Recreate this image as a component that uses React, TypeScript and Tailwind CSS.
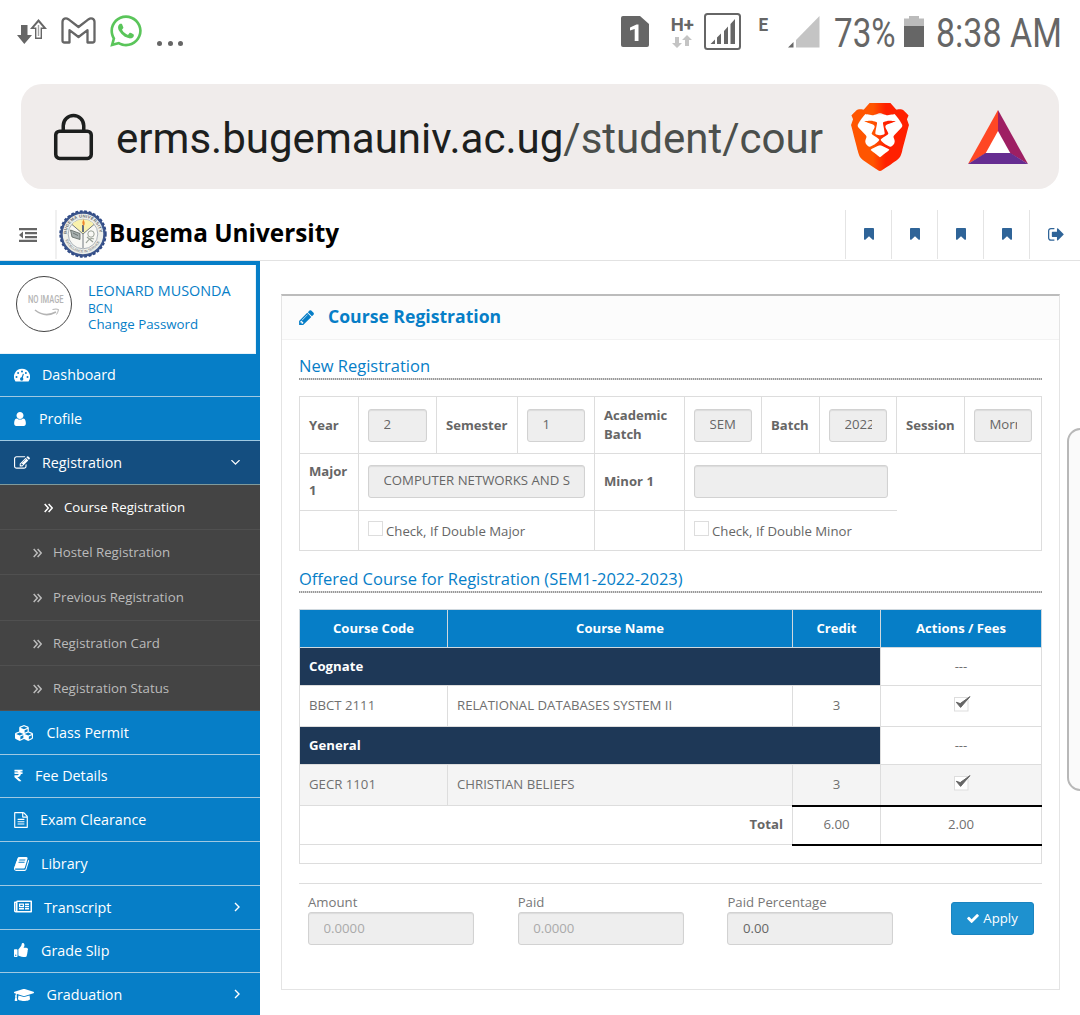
import React from "react";
import { FaCubes, FaRupeeSign, FaRegNewspaper, FaThumbsUp, FaWhatsapp, FaGraduationCap } from "react-icons/fa";
import { SiBrave } from "react-icons/si";

const P = {
  bookmark:
    "M1420 128q23 0 44 9 33 13 52.5 41t19.5 62v1289q0 34-19.5 62t-52.5 41q-19 8-44 8-48 0-83-32l-441-424-441 424q-36 33-83 33-23 0-44-9-33-13-52.5-41t-19.5-62v-1289q0-34 19.5-62t52.5-41q21-9 44-9h1048z",
  pencil:
    "M491 1536l91-91-235-235-91 91v107h128v128h107zm523-928q0-22-22-22-10 0-17 7l-542 542q-7 7-7 17 0 22 22 22 10 0 17-7l542-542q7-7 7-17zm-54-192l416 416-832 832h-416v-416zm683 96q0 53-37 90l-166 166-416-416 166-165q36-38 90-38 53 0 91 38l235 234q37 39 37 91z",
  check:
    "M1671 566q0 40-28 68l-724 724-136 136q-28 28-68 28t-68-28l-136-136-362-362q-28-28-28-68t28-68l136-136q28-28 68-28t68 28l294 295 656-657q28-28 68-28t68 28l136 136q28 28 28 68z",
  user: "M1536 1399q0 109-62.5 187t-150.5 78h-854q-88 0-150.5-78t-62.5-187q0-85 8.5-160.5t31.5-152 58.5-131 94-89 134.5-34.5q131 128 313 128t313-128q76 0 134.5 34.5t94 89 58.5 131 31.5 152 8.5 160.5zm-256-887q0 159-112.5 271.5t-271.5 112.5-271.5-112.5-112.5-271.5 112.5-271.5 271.5-112.5 271.5 112.5 112.5 271.5z",
  edit: "M888 1184l116-116-152-152-116 116v56h96v96h56zm440-720q-16-16-33 1l-350 350q-17 17-1 33t33-1l350-350q17-17 1-33zm80 594v190q0 119-84.5 203.5t-203.5 84.5h-832q-119 0-203.5-84.5t-84.5-203.5v-832q0-119 84.5-203.5t203.5-84.5h832q63 0 117 25 15 7 18 23 3 17-9 29l-49 49q-14 14-32 8-23-6-45-6h-832q-66 0-113 47t-47 113v832q0 66 47 113t113 47h832q66 0 113-47t47-113v-126q0-13 9-22l64-64q15-15 35-7t20 29zm-96-738l288 288-672 672h-288v-288zm444 132l-92 92-288-288 92-92q28-28 68-28t68 28l152 152q28 28 28 68t-28 68z",
  signout:
    "M704 1440q0 4 1 20t.5 26.5-3 23.5-10 19.5-20.5 6.5h-320q-119 0-203.5-84.5t-84.5-203.5v-704q0-119 84.5-203.5t203.5-84.5h320q13 0 22.5 9.5t9.5 22.5q0 4 1 20t.5 26.5-3 23.5-10 19.5-20.5 6.5h-320q-66 0-113 47t-47 113v704q0 66 47 113t113 47h312l11.5 1 11.5 3 8 5.5 7 9 2 13.5zm928-544q0 26-19 45l-544 544q-19 19-45 19t-45-19-19-45v-288h-448q-26 0-45-19t-19-45v-384q0-26 19-45t45-19h448v-288q0-26 19-45t45-19 45 19l544 544q19 19 19 45z",
  book: "M1703 478q40 57 18 129l-275 906q-19 64-76.5 107.5t-122.5 43.5h-923q-77 0-148.5-53.5t-99.5-131.5q-24-67-2-127 0-4 3-27t4-37q1-8-3-21.5t-3-19.5q2-11 8-21t16.5-23.5 16.5-23.5q23-38 45-91.5t30-91.5q3-10 .5-30t-.5-28q3-11 17-28t17-23q21-36 42-92t25-90q1-9-2.5-32t.5-28q4-13 22-30.5t22-22.5q19-26 42.5-84.5t27.5-96.5q1-8-3-25.5t-2-26.5q2-8 9-18t18-23 17-21q8-12 16.5-30.5t15-35 16-36 19.5-32 26.5-23.5 36-11.5 47.5 5.5l-1 3q38-9 51-9h761q74 0 114 56t18 130l-274 906q-36 119-71.5 153.5t-128.5 34.5h-869q-27 0-38 15-11 16-1 43 24 70 144 70h923q29 0 56-15.5t35-41.5l300-987q7-22 5-57 38 15 59 43zm-1064 2q-4 13 2 22.5t20 9.5h608q13 0 25.5-9.5t16.5-22.5l21-64q4-13-2-22.5t-20-9.5h-608q-13 0-25.5 9.5t-16.5 22.5zm-83 256q-4 13 2 22.5t20 9.5h608q13 0 25.5-9.5t16.5-22.5l21-64q4-13-2-22.5t-20-9.5h-608q-13 0-25.5 9.5t-16.5 22.5z",
  file: "M1596 380q28 28 48 76t20 88v1152q0 40-28 68t-68 28h-1344q-40 0-68-28t-28-68v-1600q0-40 28-68t68-28h896q40 0 88 20t76 48zm-444-244v376h376q-10-29-22-41l-313-313q-12-12-41-22zm384 1528v-1024h-416q-40 0-68-28t-28-68v-416h-768v1536h1280zM512 800q0-14 9-23t23-9h704q14 0 23 9t9 23v64q0 14-9 23t-23 9h-704q-14 0-23-9t-9-23zM512 1056q0-14 9-23t23-9h704q14 0 23 9t9 23v64q0 14-9 23t-23 9h-704q-14 0-23-9t-9-23zM512 1312q0-14 9-23t23-9h704q14 0 23 9t9 23v64q0 14-9 23t-23 9h-704q-14 0-23-9t-9-23z",
  down: "M1395 736q0 13-10 23l-466 466q-10 10-23 10t-23-10l-466-466q-10-10-10-23t10-23l50-50q10-10 23-10t23 10l393 393 393-393q10-10 23-10t23 10l50 50q10 10 10 23z",
};

function Glyph({ d, className, box = "0 0 1792 1792" }: { d: string; className: string; box?: string }) {
  return (
    <svg viewBox={box} className={className} fill="currentColor">
      <path d={d} />
    </svg>
  );
}

function Dash() {
  return (
    <svg viewBox="0 0 16 16" className="h-4 w-4">
      <path d="M8 1.8a8 8 0 0 0-6.7 12.4c.2.3.4.4.7.4h12c.3 0 .5-.1.7-.4A8 8 0 0 0 8 1.8Z" fill="#fff" />
      <g fill="#067ec7">
        <circle cx="2.5" cy="10" r="1" />
        <circle cx="4.1" cy="6.1" r="1" />
        <circle cx="8" cy="4.4" r="1" />
        <circle cx="11.9" cy="6.1" r="1" />
        <circle cx="13.5" cy="10" r="1" />
        <circle cx="7.7" cy="12" r="1.7" />
        <path d="M7.3 11 8.9 6.7l1 .3-1.3 4.4Z" />
      </g>
    </svg>
  );
}

function DoubleAngle() {
  return (
    <svg viewBox="0 0 9 10" className="h-[10px] w-[9px]" fill="none" stroke="currentColor" strokeWidth="1.5">
      <path d="m.7 1 3.6 4L.7 9M4.6 1l3.6 4-3.6 4" />
    </svg>
  );
}

function StatusBar() {
  return (
    <div className="flex h-[64px] items-start pt-[14px] pl-[17px] text-[#666]">
      <svg viewBox="0 0 30 26" className="mt-[4px] h-[26px] w-[30px] shrink-0" fill="#666">
        <path d="M4 7h6.5v10H15l-7.700 9L0 17h4z" />
        <path fillRule="evenodd" d="M21.500 1 30 11h-5v10h-7V11h-5zM21.500 4.200 16.800 9.600h2.600v9.800h4.200V9.600h2.600z" />
        <path d="M20.800 7h1.400v11h-1.400z" opacity=".6" />
      </svg>
      <svg viewBox="0 0 35 27" className="mt-[3px] ml-[14px] h-[27px] w-[35px] shrink-0" fill="none" stroke="#666" strokeWidth="2.3" strokeLinejoin="round">
        <path d="M1.500 5v18.500q0 2 2 2h5V13.200l9 6.800 9-6.800v12.300h5q2 0 2-2V5c0-3.500-3.600-4.400-5.800-2.800L17.500 10 7.300 2.200C5 .6 1.500 1.500 1.500 5Z" />
      </svg>
      <FaWhatsapp className="mt-[-1px] ml-[12px] h-[36px] w-[36px] shrink-0 text-[#5ac55a]" />
      <div className="mt-[27px] ml-[13px] flex gap-[5.500px]">
        <i className="h-[5px] w-[5px] rounded-full bg-[#666]" />
        <i className="h-[5px] w-[5px] rounded-full bg-[#666]" />
        <i className="h-[5px] w-[5px] rounded-full bg-[#666]" />
      </div>
      <svg viewBox="0 0 28 31" className="mt-[2px] ml-auto h-[31px] w-[28px] shrink-0">
        <path d="M2 0h17l9 8v21q0 2-2 2H2q-2 0-2-2V2q0-2 2-2Z" fill="#666" />
        <path d="M9 11.500 15.500 8.500h2V25h-3.800V13L9 14.500Z" fill="#fff" />
      </svg>
      <div className="mt-[1px] ml-[21px] flex w-[24px] flex-col items-center">
        <span className="font-['Roboto'] text-[18.500px] leading-[20px] font-bold">H+</span>
        <svg viewBox="0 0 20 13" className="h-[13px] w-[20px]" fill="#c4c4c4">
          <path d="M3 2h4v6h3l-5 5-5-5h3zM13 11h4V5h3l-5-5-5 5h3z" />
        </svg>
      </div>
      <svg viewBox="0 0 37 37" className="mt-[-1px] ml-[10px] h-[37px] w-[37px] shrink-0" fill="#666">
        <rect x="1" y="1" width="35" height="35" rx="2.500" fill="none" stroke="#666" strokeWidth="2" />
        <path d="M6.500 31 11 26.500V31zM13 31v-6.500l4-4V31zM20 31V18l4-4.500V31zM26.500 31V11l4.500-5v25z" />
      </svg>
      <span className="mt-[1px] ml-[17px] font-['Roboto'] text-[19px] leading-[20px] font-bold">
        <span className="inline-block scale-x-[0.9]">E</span>
      </span>
      <svg viewBox="0 0 32 32" className="mt-[2px] ml-[19px] h-[32px] w-[32px] shrink-0">
        <path d="M0 31.500 5.500 26v5.500z" fill="#666" />
        <path d="M8 31.500V24L31.500 0v31.500z" fill="#c4c4c4" />
      </svg>
      <span className="mt-[-4px] ml-[14px] w-[62px] font-['Roboto'] text-[40px] leading-[48px] whitespace-nowrap">
        <span className="inline-block origin-left scale-x-[0.83]">73%</span>
      </span>
      <svg viewBox="0 0 20 31" className="mt-[2px] ml-[8px] h-[31px] w-[20px] shrink-0">
        <path d="M5 0h10v2.500h5V11H0V2.500h5z" fill="#bbb" />
        <path d="M0 10h20v21H0z" fill="#666" />
      </svg>
      <span className="mt-[-4px] ml-[12px] w-[144px] font-['Roboto'] text-[40px] leading-[48px] whitespace-nowrap">
        <span className="inline-block origin-left scale-x-[0.85]">8:38 AM</span>
      </span>
    </div>
  );
}

function UrlBar() {
  return (
    <div className="mt-[20px] mr-[21px] ml-[21px] flex h-[105px] items-center rounded-[21px] bg-[#f0eceb] pl-[32px]">
      <svg viewBox="0 0 42 48" className="h-[48px] w-[41px] shrink-0" fill="none" stroke="#1d1f1e" strokeWidth="3.600">
        <rect x="2.800" y="18" width="36.400" height="28" rx="4" />
        <path d="M10.500 18v-5.500a10 10 0 0 1 21 0V18" />
      </svg>
      <div className="mt-[4px] ml-[22px] w-[714px] font-['Roboto'] text-[42.050px] leading-[60px] whitespace-nowrap text-[#1d1f1e]">
        erms.bugemauniv.ac.ug<span className="text-[#4b4f4c]">/student/cour</span>
      </div>
      <div className="relative ml-[16px] h-[68px] w-[68px] shrink-0">
        <svg viewBox="0 0 69 69" className="absolute inset-0 h-full w-full">
          <defs>
            <linearGradient id="mane">
              <stop offset=".38" stopColor="#ff5500" />
              <stop offset=".6" stopColor="#ff2000" />
            </linearGradient>
          </defs>
          <path d="M18 12h33l7 13-8 30-15 7-15-7-9-30z" fill="#fff" />
        </svg>
        <SiBrave className="absolute inset-0 h-full w-full fill-[url(#mane)]" />
      </div>
      <svg viewBox="0 0 60 54" className="ml-[54px] h-[54px] w-[60px] shrink-0">
        <path d="M30 20 43 43H17z" fill="#fff" />
        <path d="M30 0v21L17.500 43.500 0 54z" fill="#ff4724" />
        <path d="M30 0v21l12.500 22.500L60 54z" fill="#9e1f63" />
        <path d="M0 54 17.500 43h25L60 54z" fill="#662d91" />
      </svg>
    </div>
  );
}

function Seal() {
  return (
    <svg viewBox="0 0 48 48" className="ml-[2px] h-[48px] w-[48px]">
      <defs>
        <path id="arcTop" d="M7.500 24a16.500 16.500 0 0 1 33 0" />
        <path id="arcBottom" d="M5.500 24a18.500 18.500 0 0 0 37 0" />
      </defs>
      <circle cx="24" cy="24" r="21.500" fill="#eef0ea" stroke="#3d568c" strokeWidth="2.400" />
      <circle cx="24" cy="24" r="22.800" fill="none" stroke="#2f4a86" strokeWidth="1.800" strokeDasharray="2.800 1.700" />
      <circle cx="24" cy="24" r="14.800" fill="#f8f8f4" stroke="#8d95a0" strokeWidth=".7" />
      <path d="M24 24 13 14.500a14.500 14.500 0 0 1 22 0z" fill="#f9f1ac" />
      <path d="M24 24V38M24 24l-11-9.500M24 24l11-9.500" stroke="#747b80" strokeWidth="1" fill="none" />
      <path d="M24 22v-7" stroke="#3b4d78" strokeWidth="1.600" />
      <path d="M24 9q3 4 .8 7-3-3 0-7" fill="#f0862c" />
      <path d="m11.500 20 9.500 3.500v6L13 27zM14 23l5 2.500" fill="#a8b0b0" stroke="#5c655f" strokeWidth=".8" />
      <path d="M27 33q4-6 8-4M28 27l6 5" stroke="#98a096" strokeWidth="1.200" fill="none" />
      <circle cx="32" cy="24" r="3.200" fill="none" stroke="#98a096" />
      <text className="fill-[#666a70] font-['Liberation_Sans'] text-[4.200px] font-bold">
        <textPath href="#arcTop" textLength="50">BUGEMA UNIVERSITY</textPath>
      </text>
      <text className="fill-[#6a6e74] font-['Liberation_Sans'] text-[3.500px]">
        <textPath href="#arcBottom" startOffset="6" textLength="44">EXCELLENCE IN SERVICE</textPath>
      </text>
    </svg>
  );
}

function Header() {
  return (
    <header className="flex h-[53px] border-b border-[#e2e2e2] pt-[2px]">
      <div className="flex h-[49px] w-[57px] items-center border-r-2 border-[#f0f0f0] pl-[18.500px]">
        <svg viewBox="0 0 18 14" className="h-[14px] w-[18px]" fill="#666">
          <path d="M0 0h18v2.200H0zM6 4h12v2.200H6zM6 8h12v2.200H6zM0 11.800h18V14H0zM0 7l4-3.500v7z" />
        </svg>
      </div>
      <Seal />
      <h1 className="ml-[2px] font-['Open_Sans'] text-[24.300px] leading-[46px] font-bold text-black">Bugema University</h1>
      <div className="ml-auto flex h-[49px]">
        {[0, 1, 2, 3].map((i) => (
          <div key={i} className="flex w-[46px] items-center justify-center border-l border-[#e4e4e4]">
            <Glyph d={P.bookmark} box="256 128 1280 1536" className="mt-[-1px] h-[12px] w-[10px] text-[#2f6498]" />
          </div>
        ))}
        <div className="flex w-[51px] items-center justify-center border-l border-[#e4e4e4] pl-px">
          <Glyph d={P.signout} box="64 256 1600 1300" className="h-[13px] w-[16px] text-[#2f6498]" />
        </div>
      </div>
    </header>
  );
}

type Item = { icon: React.ReactNode; label: string; pl: string; h: string; nudge?: string; arrow?: boolean };

function MenuRow({ item }: { item: Item }) {
  return (
    <div className={`flex ${item.h} items-center border-b border-[#9fc9e2] bg-[#067ec7] pr-[20px] text-[14.300px] text-white`}>
      <span className={`flex ${item.pl} shrink-0 items-center pl-[14px]`}>{item.icon}</span>
      <span className={item.nudge}>{item.label}</span>
      {item.arrow && (
        <svg viewBox="0 0 6 10" className="mt-[-1px] ml-auto h-[10px] w-[6px]" fill="none" stroke="#fff" strokeWidth="1.400">
          <path d="m1 1 4 4-4 4" />
        </svg>
      )}
    </div>
  );
}

const top: Item[] = [
  { icon: <Dash />, label: "Dashboard", pl: "w-[42px]", h: "h-[43px]", nudge: "mt-[-1px]" },
  { icon: <Glyph d={P.user} box="256 128 1280 1536" className="h-[14px] w-[12px]" />, label: "Profile", pl: "w-[39px]", h: "h-[44px]" },
];

const bottom: Item[] = [
  { icon: <FaCubes className="h-[18px] w-[20px]" />, label: "Class Permit", pl: "w-[46.500px]", h: "h-[44px]" },
  { icon: <FaRupeeSign className="mt-[-2px] h-[13px] w-[9px]" />, label: "Fee Details", pl: "w-[35px]", h: "h-[43px]", nudge: "mt-[-1px]" },
  { icon: <Glyph d={P.file} box="128 0 1536 1792" className="h-[16px] w-[14px]" />, label: "Exam Clearance", pl: "w-[40px]", h: "h-[44px]" },
  { icon: <Glyph d={P.book} box="64 128 1664 1536" className="h-[14px] w-[15px]" />, label: "Library", pl: "w-[41px]", h: "h-[44px]" },
  { icon: <FaRegNewspaper className="mt-[-2px] h-[17px] w-[18px]" />, label: "Transcript", pl: "w-[44px]", h: "h-[44px]", arrow: true },
  { icon: <FaThumbsUp className="mt-[-2px] h-[14px] w-[14px]" />, label: "Grade Slip", pl: "w-[41px]", h: "h-[43px]", nudge: "mt-[-1px]" },
  { icon: <FaGraduationCap className="h-[16px] w-[20px]" />, label: "Graduation", pl: "w-[46.500px]", h: "h-[44px]", arrow: true },
];

const subs = [
  { label: "Hostel Registration", h: "h-[45px]" },
  { label: "Previous Registration", h: "h-[46px]" },
  { label: "Registration Card", h: "h-[45px]" },
  { label: "Registration Status", h: "h-[45px]" },
];

function Sidebar() {
  return (
    <aside className="h-[754px] w-[260px] shrink-0 overflow-hidden bg-[#067ec7] pt-[4px]">
      <div className="mr-[4px] flex h-[89px] border-r border-b border-[#e8f3fa] bg-white pt-[11px] pl-[16px]">
        <div className="flex h-[56px] w-[56px] shrink-0 flex-col items-center justify-center rounded-full border border-[#444] pt-[3px] text-[#b4b4b4]">
          <span className="ml-[4px] inline-block scale-x-[0.72] font-['Roboto'] text-[10.500px] leading-[10px] font-medium whitespace-nowrap">NO IMAGE</span>
          <svg viewBox="0 0 26 9" className="mt-[3px] ml-[6px] h-[9px] w-[26px]" fill="none" stroke="#b4b4b4">
            <path d="M1 2q10 8 21 2" strokeWidth="1.600" />
            <path d="M18.500 1.500q4-1 6 0-.5 3-2 5" />
          </svg>
        </div>
        <div className="ml-[16px] pt-[6px] leading-[16px] text-[#067ec7]">
          <div className="text-[14.400px] leading-[17px]">LEONARD MUSONDA</div>
          <div className="pt-px text-[12.200px] leading-[17px]">BCN</div>
          <div className="mt-[-1px] text-[13.300px]">Change Password</div>
        </div>
      </div>
      {top.map((i) => (
        <MenuRow key={i.label} item={i} />
      ))}
      <div className="flex h-[44px] items-center border-b border-[#7f9a9c] bg-[#144e80] pl-[14px] text-[14.300px] text-white">
        <Glyph d={P.edit} box="0 128 1792 1536" className="h-[14px] w-[16px]" />
        <span className="ml-[12px]">Registration</span>
        <Glyph d={P.down} box="397 676 998 569" className="mt-[-1px] mr-[20px] ml-auto h-[5px] w-[9px]" />
      </div>
      <div className="bg-[#444] text-[13.250px] text-[#bbb]">
        <div className="flex h-[45px] items-center border-b border-[#505050] pt-px pl-[44px] text-white">
          <DoubleAngle />
          <span className="ml-[11px]">Course Registration</span>
        </div>
        {subs.map((s) => (
          <div key={s.label} className={`flex ${s.h} items-center border-b border-[#505050] pt-px pl-[33px]`}>
            <DoubleAngle />
            <span className="ml-[11px]">{s.label}</span>
          </div>
        ))}
      </div>
      {bottom.map((i) => (
        <MenuRow key={i.label} item={i} />
      ))}
    </aside>
  );
}

function Field({ value = "", className = "", color = "text-[#666]" }: { value?: string; className?: string; color?: string }) {
  return (
    <div
      className={`flex h-[33px] items-center rounded-[3px] border border-[#d2d2d2] bg-[#eee] px-[14.500px] text-[13.200px] shadow-[inset_0_1px_1px_rgba(0,0,0,0.08)] ${color} ${className}`}
    >
      <span className="w-full overflow-hidden whitespace-nowrap">{value}</span>
    </div>
  );
}

function CheckLabel({ text }: { text: string }) {
  return (
    <div className="flex items-start">
      <i className="mt-[1px] h-[15px] w-[15px] border border-[#ddd] bg-white" />
      <span className="ml-[3px] pt-[2px] leading-[19px]">{text}</span>
    </div>
  );
}

function Heading({ children, className }: { children: React.ReactNode; className: string }) {
  return (
    <div className={`flex w-[743px] flex-col justify-between ${className}`}>
      <h3 className="text-[16.500px] leading-[24px] text-[#067ec7]">{children}</h3>
      <div className="h-[2px] bg-[repeating-linear-gradient(90deg,#999_0_1px,#d6d6d6_1px_2px)]" />
    </div>
  );
}

function FormTable() {
  const b = "border border-[#ddd] p-0 px-[9px]";
  const low = "border border-[#ddd] px-[9px] pt-0 pb-[2px]";
  const th = "text-left text-[13.100px] font-bold leading-[19px]";
  return (
    <table className="mt-[16px] w-[743px] table-fixed border-collapse text-[13.200px] text-[#666]">
      <colgroup>
        <col className="w-[59px]" /><col className="w-[78px]" /><col className="w-[81px]" /><col className="w-[77px]" /><col className="w-[90px]" />
        <col className="w-[77px]" /><col className="w-[58px]" /><col className="w-[77px]" /><col className="w-[68px]" /><col className="w-[77px]" />
      </colgroup>
      <tbody>
        <tr className="h-[57px]">
          <th className={`${b} ${th}`}>Year</th>
          <td className={b}><Field value="2" /></td>
          <th className={`${b} ${th}`}>Semester</th>
          <td className={b}><Field value="1" /></td>
          <th className={`${b} ${th}`}>Academic Batch</th>
          <td className={b}><Field value="SEM" /></td>
          <th className={`${b} ${th}`}>Batch</th>
          <td className={b}><Field value="2022" /></td>
          <th className={`${b} ${th}`}>Session</th>
          <td className={b}><Field value="Morn" /></td>
        </tr>
        <tr className="h-[57px]">
          <th className={`${low} ${th}`}>Major 1</th>
          <td colSpan={3} className={low}><Field value="COMPUTER NETWORKS AND S" /></td>
          <th className={`${low} ${th}`}>Minor 1</th>
          <td colSpan={3} className="border border-r-0 border-[#ddd] px-[9px] pt-0 pb-[2px]"><Field /></td>
          <td colSpan={2} className="border-t border-r border-[#ddd]" />
        </tr>
        <tr className="h-[40px]">
          <td className={b} />
          <td colSpan={3} className={b}><CheckLabel text="Check, If Double Major" /></td>
          <td className={b} />
          <td colSpan={3} className="border-y border-l border-[#ddd] px-[9px]"><CheckLabel text="Check, If Double Minor" /></td>
          <td colSpan={2} className="border-r border-b border-[#ddd]" />
        </tr>
      </tbody>
    </table>
  );
}

function Checked() {
  return (
    <svg viewBox="0 0 17 16" className="mx-auto mb-[4px] block h-[16px] w-[17px] translate-x-px">
      <rect x=".5" y="1.500" width="13.500" height="13.500" fill="#fff" stroke="#ddd" />
      <path d="M2.300 6.300 6.200 7.600 16 .6 6.600 11.400z" fill="#666" stroke="#666" strokeWidth="1" />
    </svg>
  );
}

function CourseTable() {
  const h = "border border-[#cfd8de] bg-[#067ec7] font-bold text-white text-[13.100px] p-0";
  const c = "border border-[#ddd] p-0";
  const rows = [
    { group: "Cognate", code: "BBCT 2111", name: "RELATIONAL DATABASES SYSTEM II", bg: "bg-white" },
    { group: "General", code: "GECR 1101", name: "CHRISTIAN BELIEFS", bg: "bg-[#f4f4f4]" },
  ];
  return (
    <table className="mt-[16px] w-[743px] table-fixed border-collapse text-[13.200px] text-[#707070]">
      <colgroup>
        <col className="w-[148px]" /><col className="w-[345px]" /><col className="w-[88px]" /><col className="w-[161px]" />
      </colgroup>
      <tbody>
        <tr className="h-[38px]">
          <th className={h}>Course Code</th>
          <th className={h}>Course Name</th>
          <th className={h}>Credit</th>
          <th className={h}>Actions / Fees</th>
        </tr>
        {rows.map((r) => (
          <React.Fragment key={r.group}>
            <tr className="h-[38px]">
              <td colSpan={3} className="border border-[#ddd] bg-[#1e3857] px-[9px] font-bold text-white">{r.group}</td>
              <td className={`${c} text-center`}>---</td>
            </tr>
            <tr className={`h-[41px] ${r.bg}`}>
              <td className={`${c} px-[9px]`}>{r.code}</td>
              <td className={`${c} px-[9px]`}>{r.name}</td>
              <td className={`${c} text-center`}>3</td>
              <td className={c}><Checked /></td>
            </tr>
          </React.Fragment>
        ))}
        <tr className="h-[39px]">
          <td colSpan={2} className={`${c} pr-[9px] text-right font-bold text-[#666]`}>Total</td>
          <td className="border-x border-y-2 border-x-[#ddd] border-y-black text-center">6.00</td>
          <td className="border-x border-y-2 border-x-[#ddd] border-y-black text-center">2.00</td>
        </tr>
        <tr className="h-[19px]">
          <td colSpan={4} className={c} />
        </tr>
      </tbody>
    </table>
  );
}

function Panel() {
  return (
    <main className="mt-[33px] ml-[21px] h-[696px] w-[779px] shrink-0 border border-t-2 border-[#e4e4e4] border-t-[#bcbcbc]">
      <div className="flex h-[44px] items-center border-b border-[#f2f2f2] bg-[#fcfcfc] pb-px pl-[17px] text-[#067ec7]">
        <Glyph d={P.pencil} box="128 128 1515 1536" className="h-[15px] w-[15px]" />
        <h2 className="mt-[-2px] ml-[14px] text-[17.600px] font-bold">Course Registration</h2>
      </div>
      <div className="pl-[17px]">
        <Heading className="h-[40px] pt-[14px]">New Registration</Heading>
        <FormTable />
        <Heading className="h-[42px] pt-[16px]">Offered Course for Registration (SEM1-2022-2023)</Heading>
        <CourseTable />
        <div className="mt-[19px] flex w-[743px] border-t border-[#ddd] pt-[9px] pl-[9px] text-[13.200px] text-[#777]">
          {[
            { l: "Amount", v: "0.0000", c: "text-[#aaa]" },
            { l: "Paid", v: "0.0000", c: "text-[#aaa]" },
            { l: "Paid Percentage", v: "0.00", c: "text-[#666]" },
          ].map((f) => (
            <div key={f.l} className="mr-[43.700px] w-[166px]">
              <div className="leading-[19px]">{f.l}</div>
              <Field value={f.v} color={f.c} />
            </div>
          ))}
          <button className="mt-[9px] ml-[14px] flex h-[33px] w-[83px] items-center justify-center gap-[4px] rounded-[3px] border border-[#1a84c0] bg-[#1e91cf] text-[13.200px] text-white">
            <Glyph d={P.check} box="121 334 1550 1188" className="h-[9px] w-[12px]" />
            Apply
          </button>
        </div>
      </div>
    </main>
  );
}

export default function App() {
  return (
    <div className="relative h-[1015px] w-[1080px] overflow-hidden bg-white font-['Open_Sans',sans-serif]">
      <StatusBar />
      <UrlBar />
      <div className="h-[19px]" />
      <Header />
      <div className="flex">
        <Sidebar />
        <Panel />
      </div>
      <div className="absolute top-[428px] -right-[14px] h-[363px] w-[27px] rounded-[14px] border-2 border-[#b8b8b8] bg-[#fafafa]" />
    </div>
  );
}
